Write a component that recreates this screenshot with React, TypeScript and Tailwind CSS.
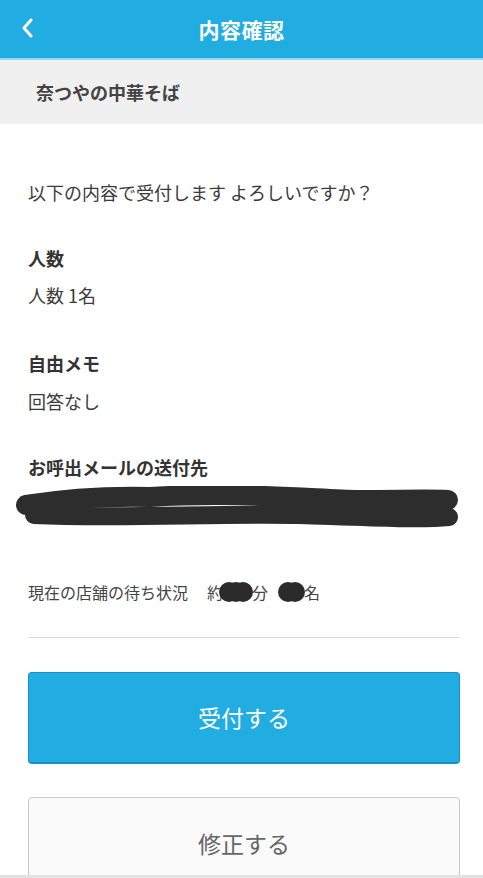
import React from "react";

const font = { fontFamily: '"Noto Sans CJK JP", "Noto Sans", sans-serif' };

function Blob({ dots }: { dots: number }) {
  // redaction blot over the numbers: a few overlapping round dabs
  const w = 20 + (dots - 1) * 7;
  return (
    <svg width={w} height="22" viewBox={`0 0 ${w} 22`} className="inline-block align-middle">
      {Array.from({ length: dots }).map((_, i) => (
        <circle key={i} cx={10 + i * 7} cy={11} r={10} fill="#2b2b2b" />
      ))}
    </svg>
  );
}

export default function App() {
  return (
    <div className="min-h-screen bg-white text-[#333]" style={font}>
      {/* header */}
      <header className="relative h-[60px] bg-[#21ade2] border-b-2 border-[#9ad8f2] flex items-center justify-center">
        <svg width="14" height="20" viewBox="0 0 14 20" className="absolute left-[21px] top-[18px]">
          <path d="M10 2 L3 10 L10 18" fill="none" stroke="#fff" strokeWidth="3" strokeLinecap="round" strokeLinejoin="round" />
        </svg>
        <h1 className="text-white text-[21px] font-bold leading-none tracking-wide">内容確認</h1>
      </header>

      {/* shop name */}
      <div className="h-[64px] bg-[#f0f0f0] flex items-center px-[36px]">
        <span className="text-[18px] font-bold text-[#444] leading-none">奈つやの中華そば</span>
      </div>

      <main className="pl-[28px] pr-[23px]">
        <p className="mt-[55px] text-[18px] leading-[26px] text-[#3a3a3a]">以下の内容で受付します よろしいですか？</p>

        <h2 className="mt-[40px] text-[18px] leading-[26px] font-bold text-[#333]">人数</h2>
        <p className="mt-[11px] text-[18px] leading-[26px] text-[#3a3a3a]">人数 1名</p>

        <h2 className="mt-[42px] text-[18px] leading-[26px] font-bold text-[#333]">自由メモ</h2>
        <p className="mt-[12px] text-[18px] leading-[26px] text-[#3a3a3a]">回答なし</p>

        <h2 className="mt-[40px] text-[18px] leading-[26px] font-bold text-[#333]">お呼出メールの送付先</h2>
        <svg width="483" height="44" viewBox="0 486 483 44" className="block -ml-[28px] mt-[6px]">
          <path d="M26 505 C 70 498, 110 496, 150 497 C 230 492, 300 498, 360 500 C 400 500, 430 499, 448 500" fill="none" stroke="#2d2d2d" strokeWidth="20" strokeLinecap="round" />
          <path d="M34 515 C 120 519, 220 513, 300 515 C 360 517, 420 520, 449 517" fill="none" stroke="#2d2d2d" strokeWidth="18" strokeLinecap="round" />
        </svg>

        <p className="mt-[51px] text-[16px] leading-[22px] text-[#444] flex items-center whitespace-nowrap">
          <span>現在の店舗の待ち状況</span>
          <span className="ml-[19px]">約</span>
          <span className="-ml-[4px] flex"><Blob dots={3} /></span>
          <span className="-ml-[1px]">分</span>
          <span className="ml-[10px] flex"><Blob dots={2} /></span>
          <span className="-ml-[1px]">名</span>
        </p>

        <div className="mt-[34px] h-px bg-[#dcdcdc]" />

        <button className="mt-[34px] w-full h-[92px] rounded-[4px] bg-[#21ade2] border border-[#1a8fbf] border-b-2 text-white text-[23px] leading-none">
          受付する
        </button>

        <button className="mt-[33px] w-full h-[92px] rounded-[4px] bg-[#fafafa] border border-[#c8c8c8] text-[#666] text-[23px] leading-none">
          修正する
        </button>
      </main>

      <div className="fixed left-0 right-0 bottom-0 h-[3px] bg-[#e2e2e2]" />
    </div>
  );
}
